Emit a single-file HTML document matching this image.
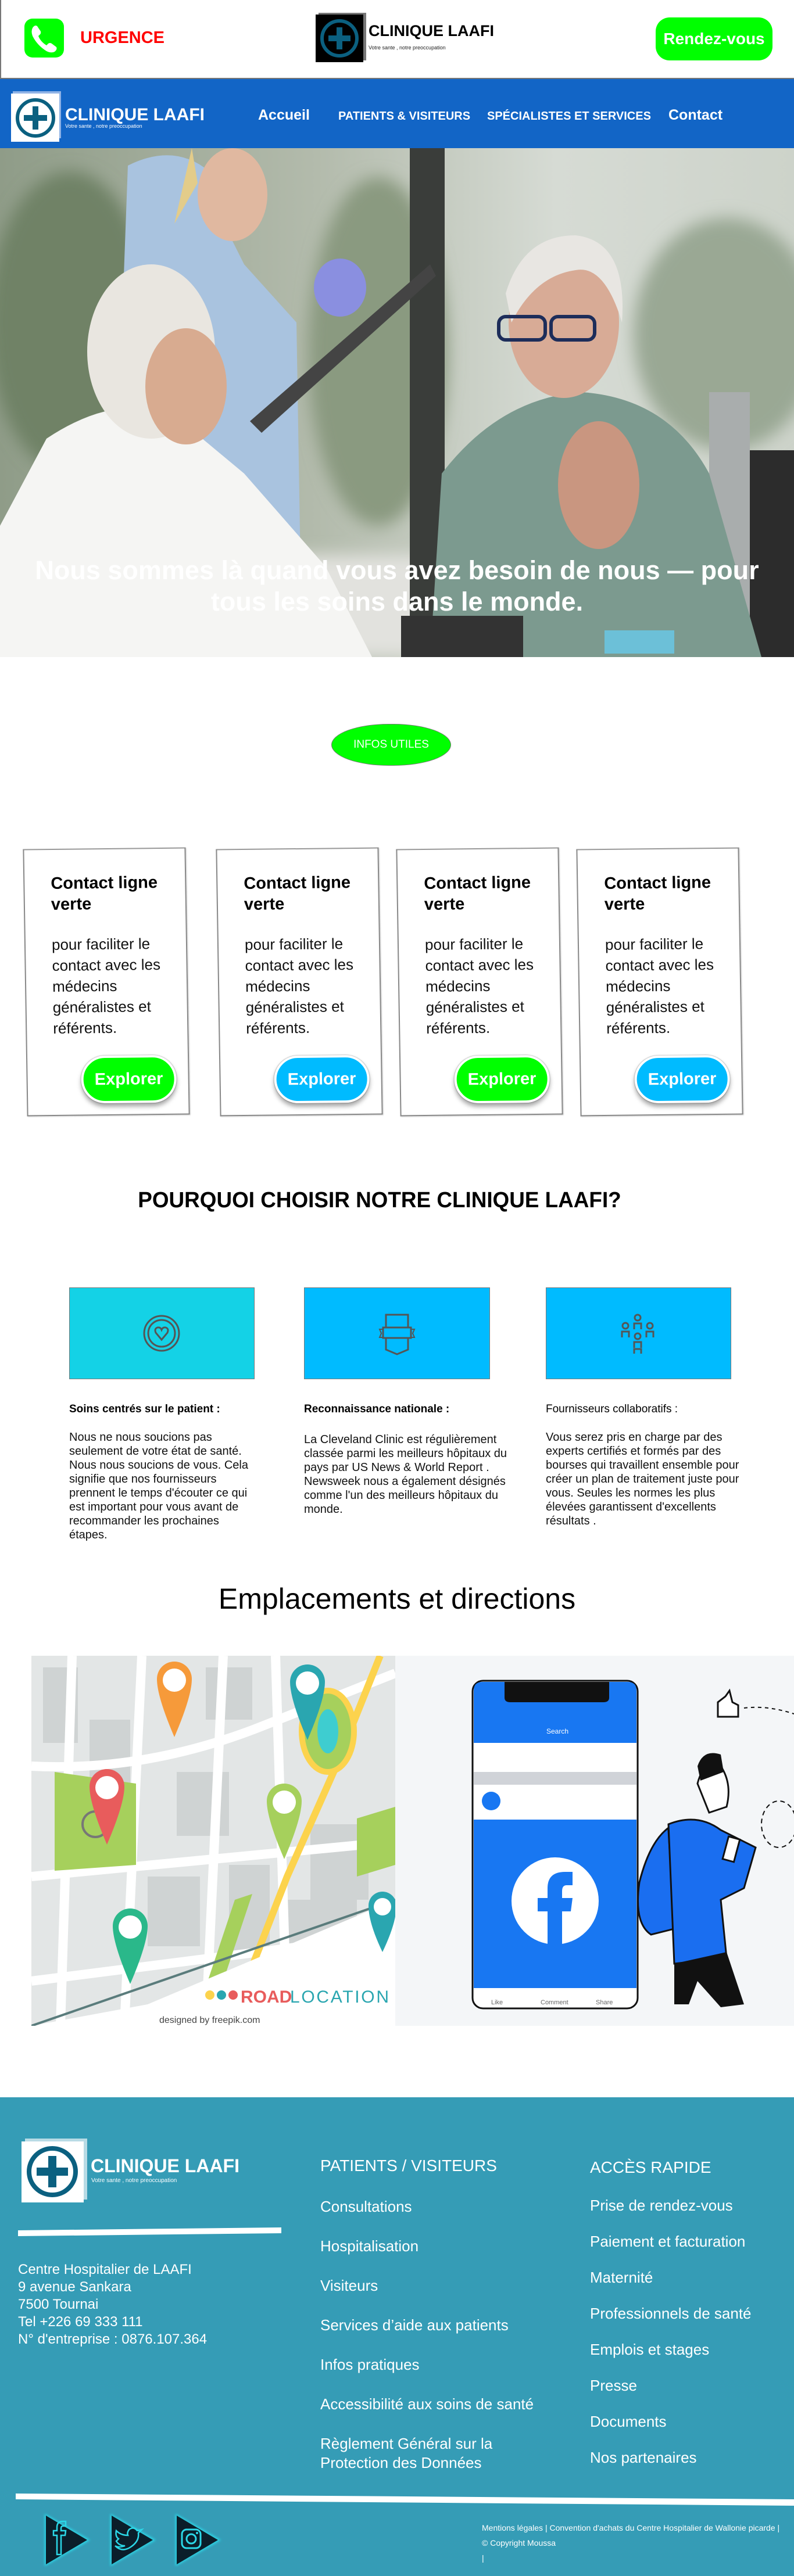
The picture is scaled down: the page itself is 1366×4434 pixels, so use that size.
<!DOCTYPE html>
<html><head><meta charset="utf-8"><style>
*{margin:0;padding:0;box-sizing:border-box}
body{width:1366px;height:4434px;position:relative;background:#fff;font-family:"Liberation Sans",Arial,sans-serif;overflow:hidden}
.a{position:absolute}
.card{position:absolute;width:280px;height:460px;background:#fff;border:2px solid #888;border-top-color:#999;transform:rotate(-0.9deg) skewY(0.3deg);box-shadow:1px 1px 2px rgba(0,0,0,.2)}
.card h3{position:absolute;left:45px;top:40px;font-size:29px;line-height:36px;font-weight:bold;color:#000;width:220px}
.card p{position:absolute;left:45px;top:145px;font-size:26px;line-height:36px;color:#111;width:220px}
.card .btn{position:absolute;left:92px;top:355px;width:164px;height:82px;border-radius:42px;border:4px solid #fff;box-shadow:0 6px 8px rgba(0,0,0,.35),0 0 2px #888;color:#fff;font-weight:bold;font-size:29px;line-height:74px;text-align:center}
.box{position:absolute;top:2216px;height:158px;border:1px solid #777}
.ft{position:absolute;color:#fff;font-size:24px;line-height:30px}
.fl{position:absolute;color:#fff;font-size:26px}
</style></head><body>
<div class="a" style="left:0;top:0;width:2px;height:134px;background:#777"></div>
<div class="a" style="left:42px;top:32px;width:68px;height:67px;background:#00ff00;border-radius:14px"></div>
<svg class="a" style="left:42px;top:32px" width="68" height="67" viewBox="0 0 68 67"><path d="M14 16 Q18 10 22 13 L28 22 Q29 26 26 28 L24 30 Q28 40 38 46 L41 43 Q44 41 47 43 L55 49 Q57 53 52 57 Q46 60 38 56 Q22 46 14 30 Q11 22 14 16Z" fill="#fff"/></svg>
<div class="a" style="left:138px;top:49px;font-size:29px;font-weight:bold;color:#ff0000">URGENCE</div>
<div class="a" style="left:548px;top:22px;width:82px;height:82px;background:#777"></div>
<div class="a" style="left:543px;top:25px;width:82px;height:82px;background:#000"></div>
<svg class="a" style="left:543px;top:25px" width="82" height="82"><circle cx="41" cy="41" r="30" fill="none" stroke="#0b6080" stroke-width="6"/><rect x="36" y="22" width="10" height="38" fill="#0b6080"/><rect x="22" y="36" width="38" height="10" fill="#0b6080"/></svg>
<div class="a" style="left:634px;top:38px;font-size:27px;font-weight:bold;color:#000">CLINIQUE LAAFI</div>
<div class="a" style="left:634px;top:77px;font-size:9px;color:#222">Votre sante , notre preoccupation</div>
<div class="a" style="left:1128px;top:30px;width:201px;height:74px;background:#00ff00;border-radius:24px;color:#fff;font-weight:bold;font-size:28px;line-height:74px;text-align:center">Rendez-vous</div>
<div class="a" style="left:0;top:134px;width:1366px;height:2px;background:#777"></div>
<div class="a" style="left:0;top:136px;width:1366px;height:119px;background:#1265c6"></div>
<div class="a" style="left:22px;top:157px;width:83px;height:81px;background:#8fb3e6"></div>
<div class="a" style="left:19px;top:161px;width:83px;height:83px;background:#fff"></div>
<svg class="a" style="left:19px;top:161px" width="83" height="83"><circle cx="42" cy="42" r="31" fill="none" stroke="#0b6080" stroke-width="6"/><rect x="37" y="22" width="10" height="40" fill="#0b6080"/><rect x="22" y="37" width="40" height="10" fill="#0b6080"/></svg>
<div class="a" style="left:112px;top:181px;font-size:30px;font-weight:bold;color:#fff">CLINIQUE LAAFI</div>
<div class="a" style="left:112px;top:212px;font-size:9px;color:#fff">Votre sante , notre preoccupation</div>
<div class="a" style="left:444px;top:184px;font-size:25px;font-weight:bold;color:#fff">Accueil</div>
<div class="a" style="left:582px;top:189px;font-size:20px;font-weight:bold;color:#fff">PATIENTS &amp; VISITEURS</div>
<div class="a" style="left:838px;top:189px;font-size:20px;font-weight:bold;color:#fff">SPÉCIALISTES ET SERVICES</div>
<div class="a" style="left:1150px;top:184px;font-size:25px;font-weight:bold;color:#fff">Contact</div>
<svg class="a" style="left:0;top:255px" width="1366" height="876" viewBox="0 0 1366 876">
<defs><linearGradient id="bg" x1="0" y1="0" x2="1" y2="0"><stop offset="0" stop-color="#8f9c88"/><stop offset=".4" stop-color="#b3bbac"/><stop offset=".7" stop-color="#d6dbd4"/><stop offset="1" stop-color="#cdd3ca"/></linearGradient>
<filter id="bl"><feGaussianBlur stdDeviation="14"/></filter></defs>
<rect width="1366" height="876" fill="url(#bg)"/>
<g filter="url(#bl)"><ellipse cx="120" cy="300" rx="140" ry="260" fill="#6f8266"/><ellipse cx="650" cy="350" rx="120" ry="300" fill="#8a9a80"/><ellipse cx="1250" cy="320" rx="160" ry="200" fill="#9aa894"/><rect x="0" y="700" width="1366" height="176" fill="#e2e2de"/></g>
<rect x="705" y="0" width="60" height="876" fill="#3a3d3a"/>
<rect x="1220" y="420" width="70" height="456" fill="#a9adad"/>
<rect x="1290" y="520" width="76" height="356" fill="#2c2c2c"/>
<path d="M220 30 Q300 -10 360 40 L370 100 L420 200 L510 300 L520 900 L380 876 L300 600 L210 300Z" fill="#a9c3df"/>
<ellipse cx="400" cy="80" rx="60" ry="80" fill="#e0b8a0"/>
<path d="M330 0 L300 130 L340 60Z" fill="#e3cc8a"/>
<path d="M430 470 L740 200 L750 220 L450 490Z" fill="#444"/>
<ellipse cx="585" cy="240" rx="45" ry="50" fill="#8a8fe0"/>
<path d="M80 500 Q200 420 300 460 L420 560 L560 720 L640 876 L0 876 L0 650Z" fill="#f5f5f3"/>
<ellipse cx="260" cy="350" rx="110" ry="150" fill="#e9e6e0"/>
<ellipse cx="320" cy="410" rx="70" ry="100" fill="#d8ab90"/>
<path d="M760 560 Q860 430 1000 420 Q1150 430 1220 560 L1310 876 L740 876Z" fill="#7c9a8f"/>
<ellipse cx="970" cy="300" rx="95" ry="130" fill="#d8ab96"/>
<path d="M870 250 Q900 150 990 150 Q1080 160 1070 300 Q1040 200 990 210 Q920 220 880 300Z" fill="#e8e6e2"/>
<rect x="858" y="290" width="80" height="40" rx="12" fill="none" stroke="#1d2d5a" stroke-width="6"/><rect x="948" y="290" width="75" height="40" rx="12" fill="none" stroke="#1d2d5a" stroke-width="6"/>
<ellipse cx="1030" cy="580" rx="70" ry="110" fill="#c99680"/>
<rect x="690" y="805" width="210" height="71" fill="#333"/>
<rect x="1040" y="830" width="120" height="40" fill="#6cc0d8"/>
</svg>
<div class="a" style="left:0;top:955px;width:1366px;text-align:center;color:#fff;font-weight:bold;font-size:45px;line-height:54px">Nous sommes là quand vous avez besoin de nous — pour<br>tous les soins dans le monde.</div>
<div class="a" style="left:570px;top:1246px;width:206px;height:72px;background:#00ff00;border-radius:48%/50%;border:1px solid #777;color:#fff;font-size:19px;line-height:70px;text-align:center">INFOS UTILES</div>
<div class="card" style="left:43px;top:1460px"><h3>Contact ligne verte</h3><p>pour faciliter le contact avec les médecins généralistes et référents.</p><div class="btn" style="background:#00ff00">Explorer</div></div>
<div class="card" style="left:375px;top:1460px"><h3>Contact ligne verte</h3><p>pour faciliter le contact avec les médecins généralistes et référents.</p><div class="btn" style="background:#00bbff">Explorer</div></div>
<div class="card" style="left:685px;top:1460px"><h3>Contact ligne verte</h3><p>pour faciliter le contact avec les médecins généralistes et référents.</p><div class="btn" style="background:#00ff00">Explorer</div></div>
<div class="card" style="left:995px;top:1460px"><h3>Contact ligne verte</h3><p>pour faciliter le contact avec les médecins généralistes et référents.</p><div class="btn" style="background:#00bbff">Explorer</div></div>
<div class="a" style="left:0;top:2045px;width:1306px;text-align:center;font-size:38px;font-weight:bold;color:#000;transform:scaleX(.97)">POURQUOI CHOISIR NOTRE CLINIQUE LAAFI?</div>
<div class="box" style="left:119px;width:319px;background:#14d2e6"></div>
<div class="box" style="left:523px;width:320px;background:#00bbff"></div>
<div class="box" style="left:939px;width:319px;background:#00bbff"></div>
<svg class="a" style="left:243px;top:2260px" width="70" height="70"><ellipse cx="35" cy="35" rx="30" ry="30" fill="none" stroke="#555" stroke-width="3"/><ellipse cx="35" cy="35" rx="23" ry="23" fill="none" stroke="#555" stroke-width="3"/><path d="M35 46 L25 34 Q22 27 28 25 Q33 24 35 29 Q37 24 42 25 Q48 27 45 34Z" fill="none" stroke="#555" stroke-width="3"/></svg>
<svg class="a" style="left:650px;top:2260px" width="66" height="75"><rect x="14" y="3" width="38" height="22" fill="none" stroke="#555" stroke-width="3"/><rect x="9" y="25" width="48" height="18" fill="none" stroke="#555" stroke-width="3"/><path d="M9 28 L3 28 L6 35 L3 42 L9 42 M57 28 L63 28 L60 35 L63 42 L57 42" fill="none" stroke="#555" stroke-width="2"/><path d="M14 43 L14 63 L33 71 L52 63 L52 43" fill="none" stroke="#555" stroke-width="3"/></svg>
<svg class="a" style="left:1062px;top:2260px" width="70" height="75"><g fill="none" stroke="#555" stroke-width="3"><circle cx="35" cy="8" r="5"/><path d="M29 28 V18 H41 V28"/><circle cx="14" cy="22" r="5"/><circle cx="56" cy="22" r="5"/><path d="M8 42 V32 H20 V42 M50 42 V32 H62 V42"/><circle cx="35" cy="40" r="5"/><path d="M29 60 V50 H41 V60"/><path d="M29 70 V62 H41 V70"/></g></svg>
<div class="a" style="left:119px;top:2415px;font-size:19px;font-weight:bold;color:#000">Soins centrés sur le patient :</div>
<div class="a" style="left:523px;top:2415px;font-size:19px;font-weight:bold;color:#000">Reconnaissance nationale :</div>
<div class="a" style="left:939px;top:2415px;font-size:19px;color:#000">Fournisseurs collaboratifs :</div>
<div class="a" style="left:119px;top:2462px;width:322px;font-size:20px;line-height:24px;color:#111">Nous ne nous soucions pas seulement de votre état de santé. Nous nous soucions de vous. Cela signifie que nos fournisseurs prennent le temps d'écouter ce qui est important pour vous avant de recommander les prochaines étapes.</div>
<div class="a" style="left:523px;top:2466px;width:355px;font-size:20px;line-height:24px;color:#111">La Cleveland Clinic est régulièrement classée parmi les meilleurs hôpitaux du pays par US News &amp; World Report . Newsweek nous a également désignés comme l'un des meilleurs hôpitaux du monde.</div>
<div class="a" style="left:939px;top:2462px;width:335px;font-size:20px;line-height:24px;color:#111">Vous serez pris en charge par des experts certifiés et formés par des bourses qui travaillent ensemble pour créer un plan de traitement juste pour vous. Seules les normes les plus élevées garantissent d'excellents résultats .</div>
<div class="a" style="left:0;top:2723px;width:1366px;text-align:center;font-size:50px;color:#000">Emplacements et directions</div>
<svg class="a" style="left:54px;top:2850px" width="626" height="637" viewBox="0 0 626 637">
<rect width="626" height="637" fill="#e3e6e6"/>
<g fill="#cfd3d3"><rect x="20" y="20" width="60" height="130"/><rect x="100" y="110" width="70" height="120"/><rect x="250" y="200" width="90" height="110"/><rect x="340" y="360" width="70" height="150"/><rect x="200" y="380" width="90" height="120"/><rect x="480" y="290" width="100" height="130"/><rect x="440" y="420" width="120" height="120"/><rect x="300" y="20" width="80" height="90"/></g>
<g stroke="#fff" stroke-width="16" fill="none"><path d="M0 190 Q200 200 400 120 L626 30"/><path d="M0 380 L626 320"/><path d="M0 560 L626 480"/><path d="M70 0 L50 637"/><path d="M190 0 L160 637"/><path d="M330 0 L300 637"/><path d="M420 0 L440 637"/></g>
<path d="M40 200 L180 220 L180 360 L40 370Z" fill="#a6d05c"/><path d="M560 280 L626 260 L626 360 L560 380Z" fill="#a6d05c"/><path d="M350 420 L380 410 L330 560 L300 570Z" fill="#a6d05c"/>
<circle cx="110" cy="290" r="22" fill="none" stroke="#777" stroke-width="4"/>
<path d="M600 0 L520 200 L440 380 L340 637" stroke="#fcd34d" stroke-width="12" fill="none"/>
<ellipse cx="510" cy="130" rx="45" ry="70" fill="#a6d05c" stroke="#fcd34d" stroke-width="10"/><ellipse cx="510" cy="130" rx="18" ry="38" fill="#3ecdd0"/>
<path d="M200 600 L626 420 L626 637 L0 637Z" fill="#fff"/><path d="M0 637 L626 420" stroke="#5a7c7c" stroke-width="4"/>
<g><path d="M216 40 a30 30 0 0 1 60 0 q0 30 -30 100 q-30 -70 -30 -100z" fill="#f69a3a"/><circle cx="246" cy="42" r="20" fill="#fff"/></g>
<g><path d="M445 45 a30 30 0 0 1 60 0 q0 30 -30 100 q-30 -70 -30 -100z" fill="#2aa6b0"/><circle cx="475" cy="47" r="20" fill="#fff"/></g>
<g><path d="M100 225 a30 30 0 0 1 60 0 q0 30 -30 100 q-30 -70 -30 -100z" fill="#e85c5c"/><circle cx="130" cy="227" r="20" fill="#fff"/></g>
<g><path d="M405 250 a30 30 0 0 1 60 0 q0 30 -30 100 q-30 -70 -30 -100z" fill="#a6d05c"/><circle cx="435" cy="252" r="20" fill="#fff"/></g>
<g><path d="M140 465 a30 30 0 0 1 60 0 q0 30 -30 100 q-30 -70 -30 -100z" fill="#2ab88a"/><circle cx="170" cy="467" r="20" fill="#fff"/></g>
<g><path d="M580 430 a24 24 0 0 1 48 0 q0 30 -24 80 q-24 -50 -24 -80z" fill="#2aa6b0"/><circle cx="604" cy="432" r="15" fill="#fff"/></g>
<circle cx="307" cy="584" r="8" fill="#fcd34d"/><circle cx="327" cy="584" r="8" fill="#2aa6b0"/><circle cx="347" cy="584" r="8" fill="#e85c5c"/>
<text x="360" y="597" font-family="Liberation Sans" font-size="30" font-weight="bold" fill="#e85c5c">ROAD</text><text x="445" y="597" font-family="Liberation Sans" font-size="30" fill="#2aa6b0" textLength="170">LOCATION</text>
<text x="220" y="632" font-family="Liberation Sans" font-size="16" fill="#444">designed by freepik.com</text>
</svg>
<svg class="a" style="left:680px;top:2850px" width="686" height="637" viewBox="0 0 686 637">
<rect width="686" height="637" fill="#f4f6f8"/>
<rect x="133" y="43" width="284" height="564" rx="18" fill="#fff" stroke="#111" stroke-width="3"/>
<path d="M135 60 Q135 45 150 45 L400 45 Q415 45 415 60 L415 150 L135 150Z" fill="#1877f2"/>
<path d="M188 45 L368 45 L368 72 Q368 80 358 80 L198 80 Q188 80 188 72Z" fill="#111"/>
<text x="260" y="134" font-family="Liberation Sans" font-size="12" fill="#fff">Search</text>
<rect x="135" y="150" width="280" height="50" fill="#fff"/>
<rect x="135" y="200" width="280" height="22" fill="#d0d3d8"/>
<circle cx="165" cy="250" r="16" fill="#1877f2"/>
<rect x="135" y="282" width="280" height="290" fill="#1877f2"/>
<circle cx="275" cy="422" r="75" fill="#fff"/>
<path d="M262 505 L262 440 L245 440 L245 417 L262 417 L262 400 Q262 372 292 372 L305 372 L305 395 L295 395 Q287 395 287 405 L287 417 L305 417 L302 440 L287 440 L287 505Z" fill="#1877f2"/>
<text x="165" y="600" font-family="Liberation Sans" font-size="11" fill="#666">Like</text><text x="250" y="600" font-family="Liberation Sans" font-size="11" fill="#666">Comment</text><text x="345" y="600" font-family="Liberation Sans" font-size="11" fill="#666">Share</text>
<path d="M480 290 Q440 310 420 390 Q410 460 440 480 L480 470 L470 300Z" fill="#1a6ef0" stroke="#111" stroke-width="3"/>
<path d="M470 290 Q520 270 560 300 L620 330 L600 400 L560 420 L570 520 L480 530 Z" fill="#1a6ef0" stroke="#111" stroke-width="3"/>
<path d="M480 530 L570 510 L600 600 L560 605 L520 560 L505 600 L480 600Z" fill="#111"/>
<path d="M520 220 Q530 180 560 190 Q580 220 570 260 L540 270Z" fill="#fff" stroke="#111" stroke-width="3"/>
<path d="M520 190 Q530 160 560 170 L565 200 L525 215Z" fill="#111"/>
<rect x="568" y="313" width="20" height="40" fill="#fff" stroke="#111" stroke-width="3" transform="rotate(15 578 333)"/>
<path d="M555 80 L568 70 L575 60 L580 80 L590 85 L590 105 L555 105Z" fill="#fff" stroke="#111" stroke-width="3"/>
<path d="M600 90 Q640 85 686 100" fill="none" stroke="#111" stroke-width="2" stroke-dasharray="6 6"/>
<ellipse cx="660" cy="290" rx="30" ry="40" fill="none" stroke="#111" stroke-width="2" stroke-dasharray="8 6"/>
</svg>
<div class="a" style="left:0;top:3610px;width:1366px;height:824px;background:#359cb6"></div>
<div class="a" style="left:43px;top:3681px;width:107px;height:105px;background:#b8dbe5"></div>
<div class="a" style="left:37px;top:3686px;width:107px;height:105px;background:#fff"></div>
<svg class="a" style="left:37px;top:3686px" width="107" height="105"><circle cx="53" cy="52" r="40" fill="none" stroke="#0b6080" stroke-width="8"/><rect x="46" y="25" width="14" height="54" fill="#0b6080"/><rect x="26" y="45" width="54" height="14" fill="#0b6080"/></svg>
<div class="a" style="left:156px;top:3710px;font-size:32px;font-weight:bold;color:#fff">CLINIQUE LAAFI</div>
<div class="a" style="left:157px;top:3748px;font-size:10px;color:#fff">Votre sante , notre preoccupation</div>
<svg class="a" style="left:31px;top:3834px" width="455" height="16"><path d="M0 5 L453 0 L453 10 L0 15Z" fill="#fff"/></svg>
<div class="ft" style="left:31px;top:3892px">Centre Hospitalier de LAAFI<br>9 avenue Sankara<br>7500 Tournai<br>Tel +226 69 333 111<br>N° d'entreprise : 0876.107.364</div>
<div class="fl" style="left:551px;top:3712px;font-size:28px">PATIENTS / VISITEURS</div>
<div class="fl" style="left:551px;top:3783px">Consultations</div>
<div class="fl" style="left:551px;top:3851px">Hospitalisation</div>
<div class="fl" style="left:551px;top:3919px">Visiteurs</div>
<div class="fl" style="left:551px;top:3987px">Services d’aide aux patients</div>
<div class="fl" style="left:551px;top:4055px">Infos pratiques</div>
<div class="fl" style="left:551px;top:4123px">Accessibilité aux soins de santé</div>
<div class="fl" style="left:551px;top:4190px;line-height:33px">Règlement Général sur la<br>Protection des Données</div>
<div class="fl" style="left:1015px;top:3715px;font-size:28px">ACCÈS RAPIDE</div>
<div class="fl" style="left:1015px;top:3781px">Prise de rendez-vous</div>
<div class="fl" style="left:1015px;top:3843px">Paiement et facturation</div>
<div class="fl" style="left:1015px;top:3905px">Maternité</div>
<div class="fl" style="left:1015px;top:3967px">Professionnels de santé</div>
<div class="fl" style="left:1015px;top:4029px">Emplois et stages</div>
<div class="fl" style="left:1015px;top:4091px">Presse</div>
<div class="fl" style="left:1015px;top:4153px">Documents</div>
<div class="fl" style="left:1015px;top:4215px">Nos partenaires</div>
<svg class="a" style="left:27px;top:4290px" width="1339" height="24"><path d="M0 2 L1339 12 L1339 23 L0 12Z" fill="#fff"/></svg>
<svg class="a" style="left:70px;top:4322px" width="320" height="100">
<defs><filter id="gl"><feGaussianBlur stdDeviation="2"/></filter></defs>
<g><path d="M7 5 L85 50 L7 95Z" fill="#2bd8e8" filter="url(#gl)"/><path d="M9 8 L80 50 L9 92Z" fill="#0b1e2a"/></g>
<g transform="translate(113 0)"><path d="M7 5 L85 50 L7 95Z" fill="#2bd8e8" filter="url(#gl)"/><path d="M9 8 L80 50 L9 92Z" fill="#0b1e2a"/></g>
<g transform="translate(225 0)"><path d="M7 5 L85 50 L7 95Z" fill="#2bd8e8" filter="url(#gl)"/><path d="M9 8 L80 50 L9 92Z" fill="#0b1e2a"/></g>
<path d="M28 75 V42 H22 V34 H28 V28 Q28 18 38 18 H43 V26 H38 Q35 26 35 30 V34 H43 L42 42 H35 V75Z" fill="none" stroke="#2bd8e8" stroke-width="2.5"/>
<path d="M130 52 Q135 60 145 60 Q133 64 128 60 Q140 72 155 62 Q170 52 168 38 L174 32 L166 34 Q160 26 152 32 Q148 38 150 42 Q138 42 130 34 Q128 44 134 48Z" fill="none" stroke="#2bd8e8" stroke-width="2.5"/>
<rect x="243" y="32" width="32" height="32" rx="8" fill="none" stroke="#2bd8e8" stroke-width="3"/><circle cx="259" cy="48" r="8" fill="none" stroke="#2bd8e8" stroke-width="3"/><circle cx="269" cy="38" r="2" fill="#2bd8e8"/>
</svg>
<div class="a" style="left:829px;top:4338px;font-size:14px;line-height:26px;color:#fff;width:520px">Mentions légales | Convention d'achats du Centre Hospitalier de Wallonie picarde |<br>© Copyright Moussa<br>|</div>
</body></html>
